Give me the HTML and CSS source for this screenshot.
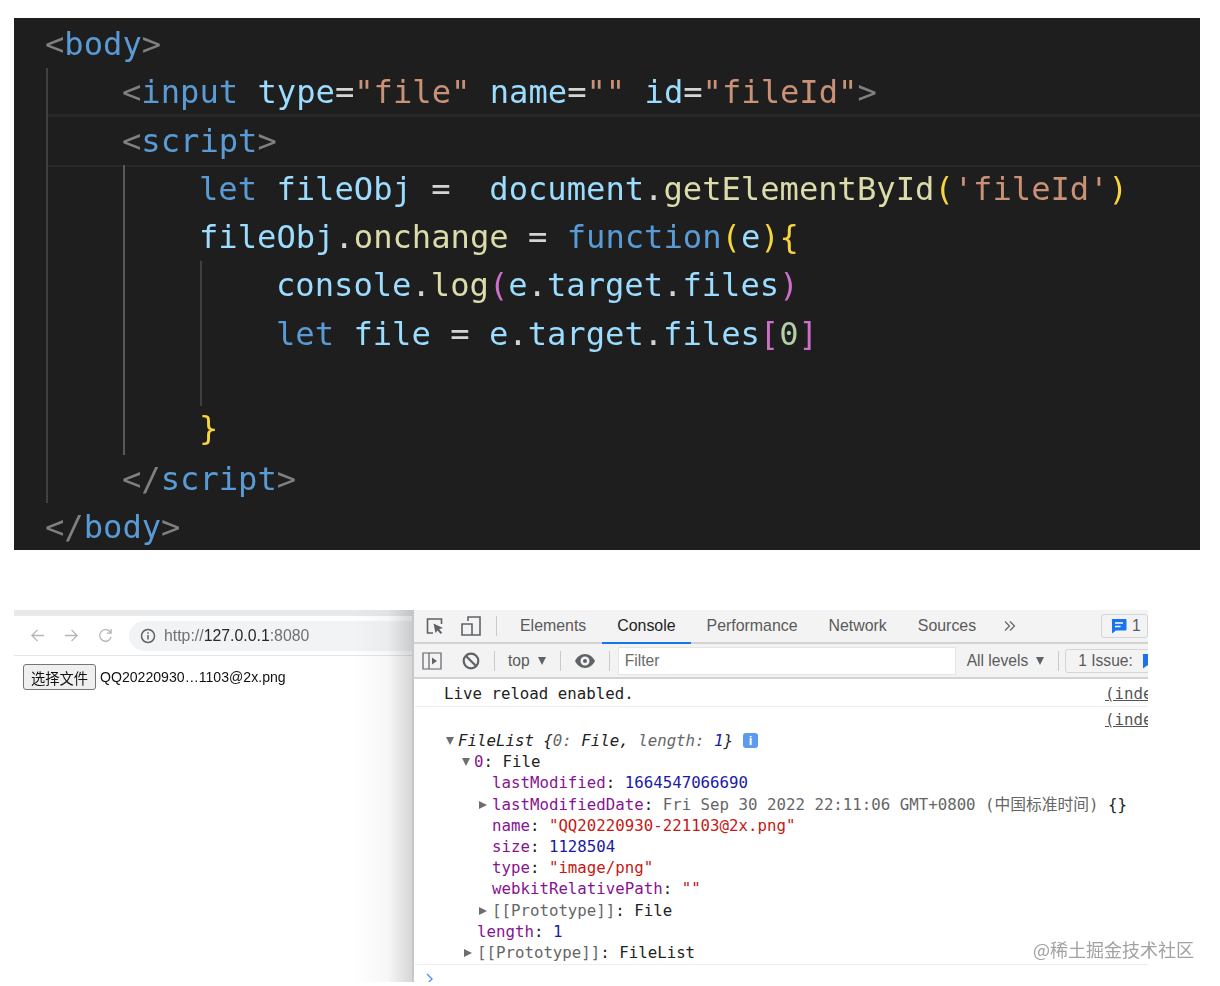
FILE: index.html
```html
<!DOCTYPE html>
<html lang="en">
<head>
    <meta charset="UTF-8">
    <title>File input demo</title>
    <link rel="stylesheet" href="styles.css">
</head>
<body>

    <div class="editor">
        <div class="line"><span class="punct">&lt;</span><span class="tag">body</span><span class="punct">&gt;</span></div>
        <div class="block">
            <div class="line"><span class="punct">&lt;</span><span class="tag">input</span> <span class="attr">type</span><span class="op">=</span><span class="str">"file"</span> <span class="attr">name</span><span class="op">=</span><span class="str">""</span> <span class="attr">id</span><span class="op">=</span><span class="str">"fileId"</span><span class="punct">&gt;</span></div>
            <div class="line active"><span class="punct">&lt;</span><span class="tag">script</span><span class="punct">&gt;</span></div>
            <div class="block">
                <div class="line"><span class="tag">let</span> <span class="attr">fileObj</span> <span class="op">=</span>  <span class="attr">document</span><span class="op">.</span><span class="fn">getElementById</span><span class="gold">(</span><span class="str">'fileId'</span><span class="gold">)</span></div>
                <div class="line"><span class="attr">fileObj</span><span class="op">.</span><span class="fn">onchange</span> <span class="op">=</span> <span class="tag">function</span><span class="gold">(</span><span class="attr">e</span><span class="gold">){</span></div>
                <div class="block">
                    <div class="line"><span class="attr">console</span><span class="op">.</span><span class="fn">log</span><span class="pink">(</span><span class="attr">e</span><span class="op">.</span><span class="attr">target</span><span class="op">.</span><span class="attr">files</span><span class="pink">)</span></div>
                    <div class="line"><span class="tag">let</span> <span class="attr">file</span> <span class="op">=</span> <span class="attr">e</span><span class="op">.</span><span class="attr">target</span><span class="op">.</span><span class="attr">files</span><span class="pink">[</span><span class="num">0</span><span class="pink">]</span></div>
                    <div class="line"> </div>
                </div>
                <div class="line brace"><span class="gold">}</span></div>
            </div>
            <div class="line"><span class="punct">&lt;/</span><span class="tag">script</span><span class="punct">&gt;</span></div>
        </div>
        <div class="line"><span class="punct">&lt;/</span><span class="tag">body</span><span class="punct">&gt;</span></div>
    </div>

    <div class="shot">
        <div class="browser">
            <div class="tabstrip"></div>
            <div class="navbar">
                <svg class="nav-icon" viewBox="0 0 16 16"><path d="M15 8H2M8 2 2 8l6 6"/></svg>
                <svg class="nav-icon" viewBox="0 0 16 16"><path d="M1 8h13M8 2l6 6-6 6"/></svg>
                <svg class="nav-icon" viewBox="0 0 16 16"><path d="M13.5 5A6.2 6.2 0 1 0 14 9.5M14 1v4.5H9.5"/></svg>
                <div class="omnibox">
                    <svg class="info-icon" viewBox="0 0 16 16"><circle cx="8" cy="8" r="6.5"/><path d="M8 7v4.5M8 4.2v1.5"/></svg>
                    <span class="url">http://<b>127.0.0.1</b>:8080</span>
                </div>
            </div>
            <div class="viewport">
                <button class="file-btn">选择文件</button>
                <span class="file-name">QQ20220930…1103@2x.png</span>
            </div>
            <div class="edge-shade"></div>
        </div>

        <div class="devtools">
            <div class="tabbar">
                <svg class="tool-icon inspect" viewBox="0 0 20 20"><path d="M8 17H2.5V3h14v5"/><path class="solid" d="M8.5 7.5 18 12l-3.8 1.2 3 3.5-1.6 1.4-3-3.6L10.500 17z"/></svg>
                <svg class="tool-icon device" viewBox="0 0 20 20"><path d="M7 5V1h12v18H1V8h10v11"/></svg>
                <i class="sep sep-tabs"></i>
                <span class="tab">Elements</span>
                <span class="tab current">Console</span>
                <span class="tab">Performance</span>
                <span class="tab">Network</span>
                <span class="tab">Sources</span>
                <svg class="more" viewBox="0 0 12 12"><path d="M1 1.500 5.500 6 1 10.500M6 1.500 10.500 6 6 10.500"/></svg>
                <div class="badge">
                    <svg class="msg" viewBox="0 0 16 16"><path d="M1.500 1h13a1 1 0 0 1 1 1v9.500a1 1 0 0 1-1 1H5L1 15.500V2a.5.500 0 0 1 .5-1z"/><path class="msg-lines" d="M4 5h8M4 8.500h5.500"/></svg>
                    <span>1</span>
                </div>
            </div>
            <div class="toolbar">
                <svg class="tool-icon panel" viewBox="0 0 20 18"><path d="M1 1h18v16H1zM7 1v16"/><path class="solid" d="m10 5.500 5 3.500-5 3.500z"/></svg>
                <svg class="tool-icon clear" viewBox="0 0 18 18"><circle cx="9" cy="9" r="7.300"/><path d="M4 4l10 10"/></svg>
                <i class="sep"></i>
                <span class="drop">top</span><i class="caret"></i>
                <i class="sep sep-ctx"></i>
                <svg class="tool-icon eye" viewBox="0 0 20 14"><path class="solid" fill-rule="evenodd" d="M10 0c4.500 0 8 3 10 7-2 4-5.500 7-10 7S2 11 0 7c2-4 5.500-7 10-7zm0 2.500a4.500 4.500 0 1 0 0 9 4.500 4.500 0 0 0 0-9zM10 5a2 2 0 1 1 0 4 2 2 0 0 1 0-4z"/></svg>
                <i class="sep"></i>
                <div class="filter">Filter</div>
                <span class="drop levels">All levels</span><i class="caret"></i>
                <i class="sep sep-levels"></i>
                <div class="issues">
                    <span>1 Issue:</span>
                    <svg class="msg" viewBox="0 0 16 16"><path d="M1.500 1h13a1 1 0 0 1 1 1v9.500a1 1 0 0 1-1 1H5L1 15.500V2a.5.500 0 0 1 .5-1z"/></svg>
                </div>
            </div>

            <div class="console">
                <div class="msg-row first"><span>Live reload enabled.</span><a>(index):10</a></div>
                <div class="msg-row second"><span></span><a>(index):11</a></div>

                <div class="tree">
                    <div class="node lv0"><i class="tw open"></i><em>FileList {<span class="dim">0: </span>File, <span class="dim">length: </span><span class="n">1</span>}</em><b class="i-badge">i</b></div>
                    <div class="node lv1"><i class="tw open"></i><span class="k">0</span>: File</div>
                    <div class="node lv2"><span class="k">lastModified</span>: <span class="n">1664547066690</span></div>
                    <div class="node lv2"><i class="tw"></i><span class="k">lastModifiedDate</span>: <span class="dim">Fri Sep 30 2022 22:11:06 GMT+0800 (中国标准时间)</span> {}</div>
                    <div class="node lv2"><span class="k">name</span>: <span class="s">"QQ20220930-221103@2x.png"</span></div>
                    <div class="node lv2"><span class="k">size</span>: <span class="n">1128504</span></div>
                    <div class="node lv2"><span class="k">type</span>: <span class="s">"image/png"</span></div>
                    <div class="node lv2"><span class="k">webkitRelativePath</span>: <span class="s">""</span></div>
                    <div class="node lv2"><i class="tw"></i><span class="dim">[[Prototype]]</span>: File</div>
                    <div class="node lv3"><span class="k">length</span>: <span class="n">1</span></div>
                    <div class="node lv3"><i class="tw"></i><span class="dim">[[Prototype]]</span>: FileList</div>
                </div>

                <div class="prompt">
                    <svg viewBox="0 0 8 12"><path d="M1 1l5 5-5 5"/></svg>
                </div>
            </div>
        </div>
    </div>

    <div class="watermark">@稀土掘金技术社区</div>

</body>
</html>
```

FILE: styles.css
```css
html, body {
    height: 986px;
    overflow: hidden;
}
body {
    margin: 0;
    background: white;
    position: relative;
    font-family: "Liberation Sans", "Noto Sans CJK SC", sans-serif;
}

/* code screenshot */
.editor {
    margin: 18px 0 0 14px;
    width: 1186px;
    height: 532px;
    padding: 2px 0 0 31px;
    box-sizing: border-box;
    background: #1e1e1e;
    overflow: hidden;
    font-family: "DejaVu Sans Mono", monospace;
    font-size: 32.15px;
    filter: blur(0.5px);
}
.line {
    height: 48.3px;
    line-height: 48.3px;
    white-space: pre;
}
.block {
    margin-left: 1px;
    border-left: 2px solid #404040;
    padding-left: 74px;
}
.block .block {
    border-left-color: #585858;
}
.block .block .block {
    border-left-color: #404040;
}
.active {
    margin-left: -74px;
    padding-left: 74px;
    box-shadow: 0 -3px 0 #282828, 0 2px 0 #282828;
}
.brace {
    line-height: 44px;
}
.punct { color: #808080; }
.tag { color: #5a9bd5; }
.attr { color: #9cdcfe; }
.op { color: #d4d4d4; }
.str { color: #c99176; }
.fn { color: #dcdcaa; }
.gold { color: #f7d53f; }
.pink { color: #cf6fc9; }
.num { color: #b5cea8; }

/* bottom screenshot */
.shot {
    display: flex;
    margin: 60px 0 0 14px;
    width: 1134px;
    height: 372px;
    overflow: hidden;
    filter: blur(0.4px);
}
.browser {
    position: relative;
    width: 398px;
    flex-shrink: 0;
}
.tabstrip {
    height: 6px;
    background: #e8e9eb;
}
.navbar {
    display: flex;
    align-items: center;
    height: 39px;
    border-bottom: 1px solid #e4e5e7;
    padding-left: 16px;
    gap: 19px;
}
.nav-icon {
    width: 15px;
    height: 15px;
    fill: none;
    stroke: #b3b6ba;
    stroke-width: 1.4;
}
.omnibox {
    flex: 1;
    display: flex;
    align-items: center;
    height: 30px;
    margin-left: -3px;
    padding-left: 11px;
    background: #f1f3f4;
    border-radius: 15px 0 0 15px;
}
.info-icon {
    width: 16px;
    height: 16px;
    fill: none;
    stroke: #5f6368;
    stroke-width: 1.5;
}
.url {
    margin-left: 8px;
    font-size: 15.85px;
    color: #6e7175;
}
.url b {
    font-weight: normal;
    color: #26282b;
}
.viewport {
    display: flex;
    align-items: center;
    padding: 8px 0 0 9px;
}
.file-btn {
    width: 73px;
    height: 26px;
    padding: 0;
    background: #efefef;
    border: 1px solid #767676;
    border-radius: 3px;
    font-family: "Noto Sans CJK SC", sans-serif;
    font-size: 14.25px;
    color: #111;
}
.file-name {
    margin-left: 4px;
    font-size: 14.1px;
    color: #111;
}
.edge-shade {
    position: absolute;
    top: 0;
    right: 0;
    bottom: 0;
    width: 60px;
    background: linear-gradient(to right, rgba(0, 0, 0, 0), rgba(0, 0, 0, 0.03) 60%, rgba(0, 0, 0, 0.16));
}

.devtools {
    flex: 1;
    min-width: 0;
    border-left: 2px solid #c6c7c9;
    overflow: hidden;
    color: #5a5a5a;
}
.tabbar, .toolbar {
    display: flex;
    align-items: center;
    background: #f3f3f3;
    border-bottom: 2px solid #d2d3d5;
    white-space: nowrap;
}
.tabbar {
    height: 32px;
    padding-left: 11px;
}
.toolbar {
    height: 33px;
    padding-left: 8px;
    font-size: 15.6px;
}
.tool-icon {
    flex-shrink: 0;
    fill: none;
    stroke: #5f6368;
    stroke-width: 1.6;
}
.tool-icon .solid {
    fill: #5f6368;
    stroke: none;
}
.inspect {
    width: 20px;
    height: 20px;
}
.device {
    width: 20px;
    height: 20px;
    margin-left: 16px;
}
.sep {
    flex-shrink: 0;
    width: 1px;
    height: 20px;
    margin: 0 14px;
    background: #c9cacc;
}
.sep-tabs {
    margin: 0 7.5px 0 15px;
}
.tab {
    height: 32px;
    line-height: 32px;
    padding: 0 15.500px;
    box-sizing: border-box;
    font-size: 15.9px;
}
.tab.current {
    color: #222;
    border-bottom: 2px solid #1a73e8;
    margin-bottom: -2px;
    height: 34px;
}
.more {
    width: 12px;
    height: 12px;
    margin-left: 12px;
    fill: none;
    stroke: #5f6368;
    stroke-width: 1.2;
}
.badge {
    display: flex;
    align-items: center;
    gap: 5px;
    margin-left: auto;
    height: 24px;
    width: 47px;
    padding-left: 9px;
    box-sizing: border-box;
    border: 1px solid #d4d5d7;
    border-radius: 3px;
    font-size: 15.6px;
}
.msg {
    flex-shrink: 0;
    width: 16px;
    height: 16px;
    fill: #1a73e8;
}
.msg-lines {
    stroke: white;
    stroke-width: 1.6;
}
.panel {
    width: 20px;
    height: 18px;
    stroke-width: 1.200;
}
.clear {
    width: 18px;
    height: 18px;
    margin-left: 20px;
    stroke-width: 2.200;
}
.drop {
    margin-left: -1px;
    color: #5a5a5a;
}
.caret {
    flex-shrink: 0;
    margin-left: 8px;
    border-left: 4.500px solid transparent;
    border-right: 4.500px solid transparent;
    border-top: 8px solid #5f6368;
}
.sep-ctx {
    margin-right: 14px;
}
.eye {
    width: 20px;
    height: 14px;
}
.filter {
    flex-shrink: 0;
    width: 330px;
    height: 26px;
    line-height: 26px;
    margin-left: -6px;
    padding-left: 6px;
    background: white;
    border: 1px solid #e4e5e7;
    color: #6a6a6a;
}
.levels {
    margin-left: 11px;
}
.sep-levels {
    margin: 0 6px 0 14px;
}
.issues {
    flex-shrink: 0;
    display: flex;
    align-items: center;
    gap: 9px;
    height: 24px;
    width: 110px;
    padding-left: 12px;
    box-sizing: border-box;
    border: 1px solid #d4d5d7;
    border-radius: 3px;
}

.console {
    padding-left: 1px;
    background: white;
    font-family: "DejaVu Sans Mono", "Noto Sans CJK SC", monospace;
    font-size: 15.75px;
    color: #222;
}
.msg-row {
    display: flex;
    justify-content: space-between;
    white-space: nowrap;
    padding-left: 29px;
}
.msg-row.first {
    height: 27px;
    line-height: 29px;
    border-bottom: 1px solid #eeeeee;
}
.msg-row.second {
    height: 23px;
    line-height: 25px;
}
.msg-row a {
    flex-shrink: 0;
    width: 43px;
    overflow: hidden;
    color: #555;
    text-decoration: underline;
}
.tree {
    height: 234px;
    border-bottom: 1px solid #eeeeee;
}
.node {
    height: 21.200px;
    line-height: 21.200px;
    white-space: nowrap;
}
.lv0 { padding-left: 44px; }
.lv1 { padding-left: 60px; }
.lv2 { padding-left: 77px; }
.lv3 { padding-left: 62px; }
.tw {
    display: inline-block;
    width: 0;
    height: 0;
    margin-left: -13px;
    margin-right: 5px;
    vertical-align: 1px;
    border-top: 4.500px solid transparent;
    border-bottom: 4.500px solid transparent;
    border-left: 8px solid #6e6e6e;
}
.tw.open {
    margin-right: 4px;
    vertical-align: 1px;
    border-left: 4.500px solid transparent;
    border-right: 4.500px solid transparent;
    border-bottom: 0;
    border-top: 8px solid #6e6e6e;
}
.k { color: #881391; }
.n { color: #1a1aa6; }
.s { color: #c41a16; }
.dim { color: #666; }
.i-badge {
    display: inline-block;
    width: 15px;
    height: 15px;
    line-height: 15px;
    margin-left: 10px;
    border-radius: 3px;
    background: #5c9bf0;
    color: white;
    font-family: "Liberation Sans", sans-serif;
    font-size: 13px;
    text-align: center;
    vertical-align: 1px;
}
.prompt {
    padding: 8px 0 0 11px;
}
.prompt svg {
    display: block;
    width: 8px;
    height: 12px;
    fill: none;
    stroke: #5b8fe8;
    stroke-width: 1.4;
}

.watermark {
    position: absolute;
    top: 937px;
    left: 1033px;
    font-family: "Noto Sans CJK SC", sans-serif;
    font-size: 18px;
    line-height: 24px;
    color: #a2a2a2;
}
```
